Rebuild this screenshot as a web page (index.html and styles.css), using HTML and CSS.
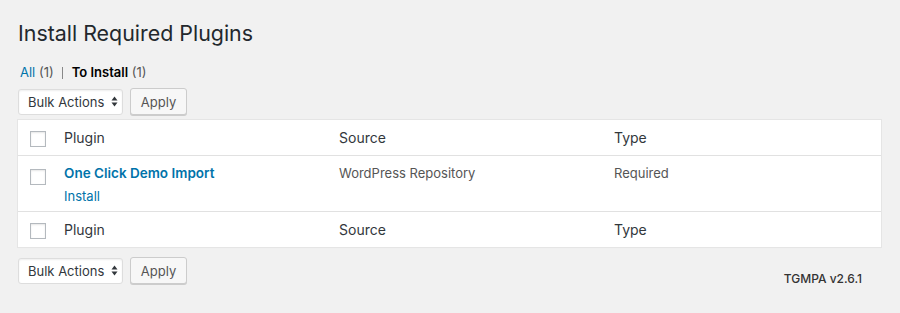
FILE: index.html
```html
<!DOCTYPE html>
<html>
<head>
<meta charset="utf-8">
<link rel="stylesheet" href="styles.css">
</head>
<body>
<div class="wrap">
  <h1 class="title">Install Required Plugins</h1>
  <ul class="subsub">
    <li><a class="link" href="#">All <span class="count">(1)</span></a><span class="sep"></span></li>
    <li><span class="current">To Install</span>&nbsp;<span class="count">(1)</span></li>
  </ul>
  <div class="tablenav top">
    <div class="select"><span>Bulk Actions</span><svg class="arrows" width="7" height="11" viewBox="0 0 7 11"><path d="M3.5 0.5 L6.5 4.5 L0.5 4.5 Z M3.5 10.5 L6.5 6.5 L0.5 6.5 Z" fill="#32373c"/></svg></div>
    <button class="btn">Apply</button>
  </div>
  <table class="plugins">
    <thead>
      <tr><td class="cb"><span class="box"></span></td><th>Plugin</th><th>Source</th><th>Type</th></tr>
    </thead>
    <tbody>
      <tr>
        <td class="cb"><span class="box"></span></td>
        <td><a class="name" href="#">One Click Demo Import</a><div class="actions"><a class="link" href="#">Install</a></div></td>
        <td class="cell">WordPress Repository</td>
        <td class="cell">Required</td>
      </tr>
    </tbody>
    <tfoot>
      <tr><td class="cb"><span class="box"></span></td><th>Plugin</th><th>Source</th><th>Type</th></tr>
    </tfoot>
  </table>
  <div class="tablenav bottom">
    <div class="left">
      <div class="select"><span>Bulk Actions</span><svg class="arrows" width="7" height="11" viewBox="0 0 7 11"><path d="M3.5 0.5 L6.5 4.5 L0.5 4.5 Z M3.5 10.5 L6.5 6.5 L0.5 6.5 Z" fill="#32373c"/></svg></div>
      <button class="btn">Apply</button>
    </div>
    <div class="version">TGMPA v2.6.1</div>
  </div>
</div>
</body>
</html>
```
FILE: styles.css
```css
* { box-sizing: border-box; }
html, body { margin: 0; padding: 0; }
body {
  background: #f1f1f1;
  font-family: "Inter", "Roboto", sans-serif;
  font-size: 13px;
  color: #444;
  width: 900px;
  height: 313px;
  overflow: hidden;
}
.wrap { padding: 0 19px 0 18px; }
.title {
  margin: 0;
  padding: 18px 0 0 0;
  font-size: 21.4px;
  font-weight: 400;
  line-height: 30px;
  color: #23282d;
}
.subsub {
  list-style: none;
  margin: 0;
  padding: 15px 0 0 2px;
  display: flex;
  line-height: 18px;
  font-size: 13px;
  color: #666;
}
.subsub li { display: flex; align-items: center; }
.link { color: #0073aa; text-decoration: none; }
.count { color: #555; }
.sep { width: 1px; height: 12px; background: #888; margin: 1px 9px 0 8px; }
.current { color: #000; font-weight: 600; }
.tablenav {
  display: flex;
  align-items: center;
  gap: 7px;
  height: 27px;
}
.tablenav.top { margin-top: 7px; margin-bottom: 5px; }
.tablenav.bottom { margin-top: 10px; justify-content: space-between; align-items: flex-start; }
.tablenav .left { display: flex; gap: 7px; align-items: center; }
.select {
  display: flex;
  align-items: center;
  justify-content: space-between;
  width: 105px;
  height: 26px;
  padding: 0 4px 0 9px;
  background: #fff;
  border: 1px solid #ddd;
  border-radius: 3px;
  box-shadow: inset 0 1px 2px rgba(0,0,0,0.07);
  color: #32373c;
  font-size: 13px;
}
.arrows { display: block; }
.btn {
  font-family: inherit;
  font-size: 13px;
  color: #555;
  background: #f7f7f7;
  border: 1px solid #ccc;
  border-radius: 3px;
  box-shadow: 0 1px 0 #ccc;
  height: 27px;
  width: 57px;
  padding: 0;
}
.plugins {
  width: 863px;
  border-collapse: collapse;
  table-layout: fixed;
  background: #fff;
  box-shadow: 0 1px 1px rgba(0,0,0,0.04);
  outline: 1px solid #e5e5e5;
}
.plugins th, .plugins td {
  text-align: left;
  vertical-align: top;
  font-weight: 400;
}
.plugins th { color: #32373c; font-size: 14px; padding: 9px 8px 0 8px; height: 35px; }
.plugins tfoot th { height: 36px; }
.plugins .cb { width: 38px; padding: 11px 0 0 12px; }
.plugins thead tr { border-bottom: 1px solid #e1e1e1; }
.plugins tfoot tr { border-top: 1px solid #e1e1e1; }
.plugins tbody td { height: 56px; padding: 8px 8px 0 8px; }
.plugins tbody td.cb { padding: 13px 0 0 12px; }
.box {
  display: block;
  width: 16px;
  height: 16px;
  border: 1px solid #b4b9be;
  background: #fff;
  box-shadow: inset 0 1px 2px rgba(0,0,0,0.1);
}
.name { color: #0073aa; font-weight: 600; font-size: 13.5px; text-decoration: none; line-height: 18px; display: block; }
.actions { margin-top: 5px; line-height: 18px; }
.cell { color: #555; line-height: 18px; }
.version { color: #333; font-size: 12px; font-weight: 500; padding-right: 19px; padding-top: 14px; }
```
